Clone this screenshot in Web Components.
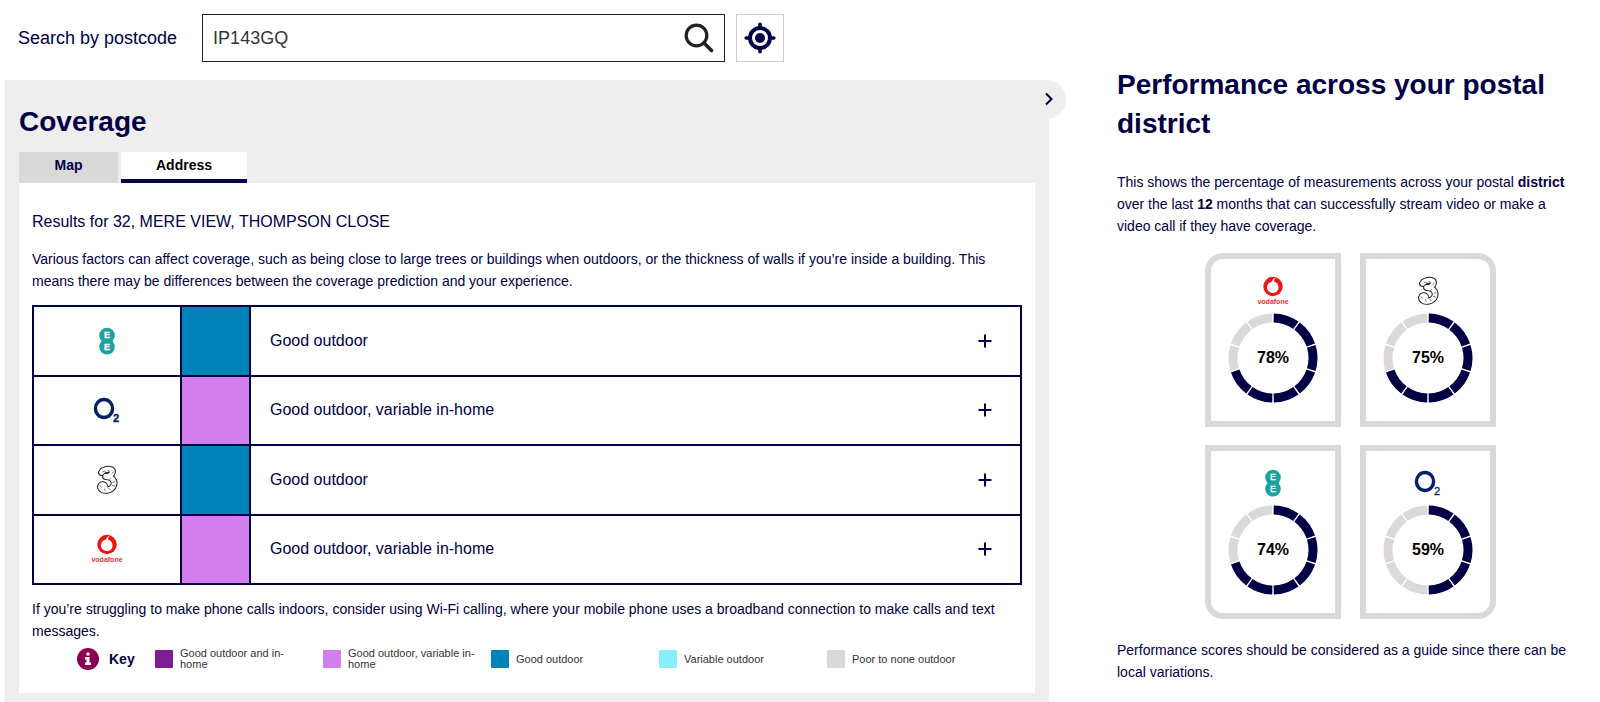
<!DOCTYPE html>
<html lang="en">
<head>
<meta charset="utf-8">
<title>Mobile coverage checker</title>
<style>
  body { margin: 0; background: #fff; color: #000045; font: 14px/22px "Liberation Sans", Arial, sans-serif; }
</style>
</head>
<body>
<coverage-app></coverage-app>

<script>
const define = (name, html, setup) => {
  const template = document.createElement('template');
  template.innerHTML = html;
  customElements.define(name, class extends HTMLElement {
    connectedCallback() {
      if (this.shadowRoot) return;
      this.attachShadow({ mode: 'open' }).append(template.content.cloneNode(true));
      if (setup) setup(this, this.shadowRoot);
    }
  });
};

/* Operator logos, each on a 32 x 32 canvas */
const THREE = 'M10.500 8.500C13 4.500 22 4 21.500 8C21 11 17.500 12.800 14.500 12.500C20 12.500 24 16 23 20.500C21 27.500 10.500 28 9.500 23.500C9 20 13 20 14 22.500';
const LOGOS = {
  ee: ['EE', `<g fill="#1aa39f"><circle cx="16" cy="10.500" r="7.800"/><circle cx="16" cy="21.800" r="7.800"/></g>
    <g fill="#fff" stroke="#fff" stroke-width=".3" font-size="9" text-anchor="middle"><text x="16" y="13">E</text><text x="16" y="25">E</text></g>`],
  o2: ['O2', `<ellipse cx="13" cy="14.500" rx="8.600" ry="9" fill="none" stroke="#032067" stroke-width="3.400"/>
    <text x="22" y="28" font-size="11" fill="#032067" stroke="#032067" stroke-width=".3">2</text>`],
  three: ['Three', `<g fill="none" stroke-linecap="round" stroke-linejoin="round">
      <path d="${THREE}" stroke="#222" stroke-width="6.800"/>
      <path d="${THREE}" stroke="#fff" stroke-width="4.800"/>
      <path d="M12 7.500q1.500-1 2.500 0M17 6.500q1.500 0 1.500 1.200M22.500 8l-1.500 1.500M19.500 14.500l-1 1M24 17.500l-2 1M23.500 22l-2-.5M19.500 26l-1.500-1.500M14 26.500l-.5-1.500M9 22l1.500 1" stroke="#666" stroke-width=".9"/></g>`],
  vodafone: ['Vodafone', `<circle cx="16" cy="11.500" r="9.700" fill="#ee1511"/>
    <path fill="#fff" d="M19.500 2.400C16.500 3 15 5 15.200 6.600C11.800 7.200 9.800 9.800 10 12.600C10.200 15.900 12.800 18.100 16 18C19.500 17.900 21.700 15.300 21.500 12.200C21.300 9.200 19.500 7.500 17 6.600C16.900 5 17.800 3.200 19.500 2.400Z"/>
    <text x="16" y="29" font-size="7" font-weight="700" fill="#e83030" text-anchor="middle">vodafone</text>`]
};

define('operator-logo', `
<style>
  :host { display: inline-block; width: 32px; height: 32px; }
  svg { display: block; width: 100%; height: 100%; overflow: visible; }
</style>
<svg viewBox="0 0 32 32" role="img"></svg>`, (host, root) => {
  const [label, art] = LOGOS[host.getAttribute('name')];
  const svg = root.querySelector('svg');
  svg.setAttribute('aria-label', label);
  svg.innerHTML = art;
});

define('postcode-search', `
<style>
  :host { display: block; }
  form { display: flex; align-items: center; padding: 14px 0 18px 18px; font-size: 18px; color: #000045; }
  label { margin-right: 25px; white-space: nowrap; }
  .field { display: flex; flex: 0 1 523px; box-sizing: border-box; height: 48px; border: 1px solid #222; }
  input { flex: 1; min-width: 0; border: 0; padding: 0 0 0 10px; background: none; font: inherit; color: #333; outline: 0; }
  button { display: grid; place-items: center; padding: 0; border: 0; background: #fff; }
  .go { width: 50px; }
  .locate { width: 48px; height: 48px; margin-left: 11px; border: 1px solid #d0caca; }
</style>
<form onsubmit="return false">
  <label for="postcode">Search by postcode</label>
  <div class="field">
    <input id="postcode" value="IP143GQ" autocomplete="off">
    <button class="go" aria-label="Search"><svg width="30" height="30" viewBox="0 0 30 30" fill="none" stroke="#222"><circle cx="12.500" cy="12.500" r="10.300" stroke-width="3.200"/><path d="M20 20L27.500 27.500" stroke-width="3.600" stroke-linecap="round"/></svg></button>
  </div>
  <button type="button" class="locate" aria-label="Use my location"><svg width="32" height="32" viewBox="0 0 32 32" fill="none" stroke="#000045"><circle cx="16" cy="16" r="10" stroke-width="4"/><circle cx="16" cy="16" r="5" fill="#000045" stroke="none"/><path d="M16 2.200v4M16 25.800v4M2.200 16h4M25.800 16h4" stroke-width="3.600" stroke-linecap="round"/></svg></button>
</form>`);

define('tab-button', `
<style>
  :host { display: block; }
  button { box-sizing: border-box; width: 100%; height: 31px; border: 0; padding: 0 0 5px; background: #d9d9d9; color: #000045; font: 700 14px/22px "Liberation Sans", Arial, sans-serif; }
  :host([selected]) button { background: #fff; color: #000; border-bottom: 4px solid #000045; padding: 0 0 1px; }
</style>
<button role="tab"><slot></slot></button>`, (host, root) => {
  root.querySelector('button').setAttribute('aria-selected', host.hasAttribute('selected'));
});

define('coverage-table', `
<style>
  :host { display: block; }
  table { width: 100%; height: 280px; border-collapse: collapse; table-layout: fixed; font-size: 16px; }
  th, td { border: 2px solid #000045; padding: 0; }
  .brand { width: 148px; } .level { width: 69px; }
  operator-logo { vertical-align: middle; }
  .status div { display: flex; align-items: center; justify-content: space-between; padding: 0 19px; }
  button { display: grid; place-items: center; width: 32px; height: 32px; border: 0; padding: 0; background: none; }
</style>
<table aria-label="Coverage by operator">
  <colgroup><col class="brand"><col class="level"><col></colgroup>
  <tbody></tbody>
</table>`, (host, root) => {
  const blue = '#0083b8', violet = '#d27eed';
  const rows = [
    ['ee', blue, 'Good outdoor'],
    ['o2', violet, 'Good outdoor, variable in-home'],
    ['three', blue, 'Good outdoor'],
    ['vodafone', violet, 'Good outdoor, variable in-home']
  ];
  root.querySelector('tbody').innerHTML = rows.map(([name, colour, text]) => `
    <tr><th scope="row"><operator-logo name="${name}"></operator-logo></th>
    <td style="background:${colour}"></td>
    <td class="status"><div>${text}<button aria-label="Show details"><svg width="14" height="14" viewBox="0 0 14 14" stroke="#000045" stroke-width="2"><path d="M7 .5v13M.5 7h13"/></svg></button></div></td></tr>`).join('');
});

define('coverage-key', `
<style>
  :host { display: flex; align-items: center; padding-left: 45px; }
  .title { display: flex; align-items: center; gap: 10px; width: 78px; font-weight: 700; }
  ul { display: grid; grid-template-columns: repeat(5, 168px); align-items: center; margin: 0; padding: 0; list-style: none; }
  li { display: flex; align-items: center; gap: 7px; font-size: 11px; line-height: 11px; color: #333; }
  i { flex: none; width: 18px; height: 18px; border-radius: 1px; }
  span { max-width: 128px; }
</style>
<div class="title"><svg width="22" height="22" viewBox="0 0 22 22"><circle cx="11" cy="11" r="11" fill="#8c0050"/><path d="M9.500 4.500h3v3h-3zM8 9h4.500v5.500H14V17H8v-2.500h1.500v-3H8z" fill="#fff"/></svg>Key</div>
<ul>
  <li><i style="background:#801d96"></i><span>Good outdoor and in-<br>home</span></li>
  <li><i style="background:#d27eed"></i><span>Good outdoor, variable in-<br>home</span></li>
  <li><i style="background:#0083b8"></i><span>Good outdoor</span></li>
  <li><i style="background:#88edff"></i><span>Variable outdoor</span></li>
  <li><i style="background:#d9d9d9"></i><span>Poor to none outdoor</span></li>
</ul>`);

define('coverage-panel', `
<style>
  :host { display: block; position: relative; background: #eee; padding: 22px 14px 9px; }
  .collapse { position: absolute; top: 0; right: -17px; display: grid; place-items: center; width: 34px; height: 39px; border: 0; padding: 0 0 2px; background: #eee; border-radius: 0 20px 20px 0; }
  h2 { margin: 0 0 11px; font-size: 28px; line-height: 39px; }
  .tabs { display: grid; grid-template-columns: 99px 126px; gap: 3px; }
  .sheet { background: #fff; padding: 28px 13px 23px; }
  h3 { margin: 0; font-size: 16px; font-weight: 400; line-height: 22px; }
  p { margin: 15px 0 13px; }
  p.note { margin: 13px 0 6px; }
</style>
<button class="collapse" aria-label="Toggle panel"><svg width="8" height="14" viewBox="0 0 8 14" fill="none" stroke="#000045" stroke-width="2"><path d="M1 1.500L6.500 7L1 12.500"/></svg></button>
<h2>Coverage</h2>
<div class="tabs" role="tablist"><tab-button>Map</tab-button><tab-button selected>Address</tab-button></div>
<div class="sheet">
  <h3>Results for 32, MERE VIEW, THOMPSON CLOSE</h3>
  <p>Various factors can affect coverage, such as being close to large trees or buildings when outdoors, or the thickness of walls if you’re inside a building. This means there may be differences between the coverage prediction and your experience.</p>
  <coverage-table></coverage-table>
  <p class="note">If you’re struggling to make phone calls indoors, consider using Wi-Fi calling, where your mobile phone uses a broadband connection to make calls and text messages.</p>
  <coverage-key></coverage-key>
</div>`);

define('score-card', `
<style>
  :host { display: flex; flex-direction: column; align-items: center; gap: 6px; box-sizing: border-box; height: 174px; padding-top: 16px; border: 6px solid #ddd8d8; }
  .ring { display: block; width: 90px; height: 90px; }
  text { font-size: 16px; font-weight: 700; fill: #000; text-anchor: middle; }
</style>
<svg class="ring" viewBox="0 0 90 90"></svg>`, (host, root) => {
  const score = Number(host.getAttribute('score'));
  const ring = root.querySelector('.ring');
  const logo = document.createElement('operator-logo');
  logo.setAttribute('name', host.getAttribute('operator'));
  ring.before(logo);
  const filled = Math.floor(score / 10);
  const point = (r, deg) => {
    const a = (deg - 90) * Math.PI / 180;
    return `${(45 + r * Math.cos(a)).toFixed(2)} ${(45 + r * Math.sin(a)).toFixed(2)}`;
  };
  let art = '';
  // ten equal segments with a two-degree gap between neighbours
  for (let i = 0; i < 10; i++) {
    art += `<path d="M${point(40, i * 36 + 1)}A40 40 0 0 1 ${point(40, i * 36 + 35)}" fill="none" stroke="${i < filled ? '#000045' : '#ddd8d8'}" stroke-width="9"/>`;
  }
  ring.innerHTML = art + `<text x="45" y="50">${score}%</text>`;
});

define('performance-panel', `
<style>
  :host { display: block; }
  h2 { margin: 0 0 28px; font-size: 28px; line-height: 39px; }
  p { margin: 0; padding-right: 8px; }
  .cards { display: grid; grid-template-columns: 136px 136px; justify-content: center; gap: 18px 19px; margin: 16px 0 20px; }
  .tl { border-top-left-radius: 18px; } .tr { border-top-right-radius: 18px; }
  .bl { border-bottom-left-radius: 18px; } .br { border-bottom-right-radius: 18px; }
</style>
<h2>Performance across your postal district</h2>
<p>This shows the percentage of measurements across your postal <strong>district</strong> over the last <strong>12</strong> months that can successfully stream video or make a video call if they have coverage.</p>
<div class="cards">
  <score-card class="tl" operator="vodafone" score="78"></score-card>
  <score-card class="tr" operator="three" score="75"></score-card>
  <score-card class="bl" operator="ee" score="74"></score-card>
  <score-card class="br" operator="o2" score="59"></score-card>
</div>
<p>Performance scores should be considered as a guide since there can be local variations.</p>`);

define('coverage-app', `
<style>
  :host { display: grid; grid-template-columns: minmax(0, 1049fr) minmax(0, 551fr); align-items: start; }
  coverage-panel { margin-left: 5px; }
  performance-panel { padding: 65px 16px 0 68px; }
</style>
<main><postcode-search></postcode-search><coverage-panel></coverage-panel></main>
<performance-panel></performance-panel>`);
</script>
</body>
</html>
